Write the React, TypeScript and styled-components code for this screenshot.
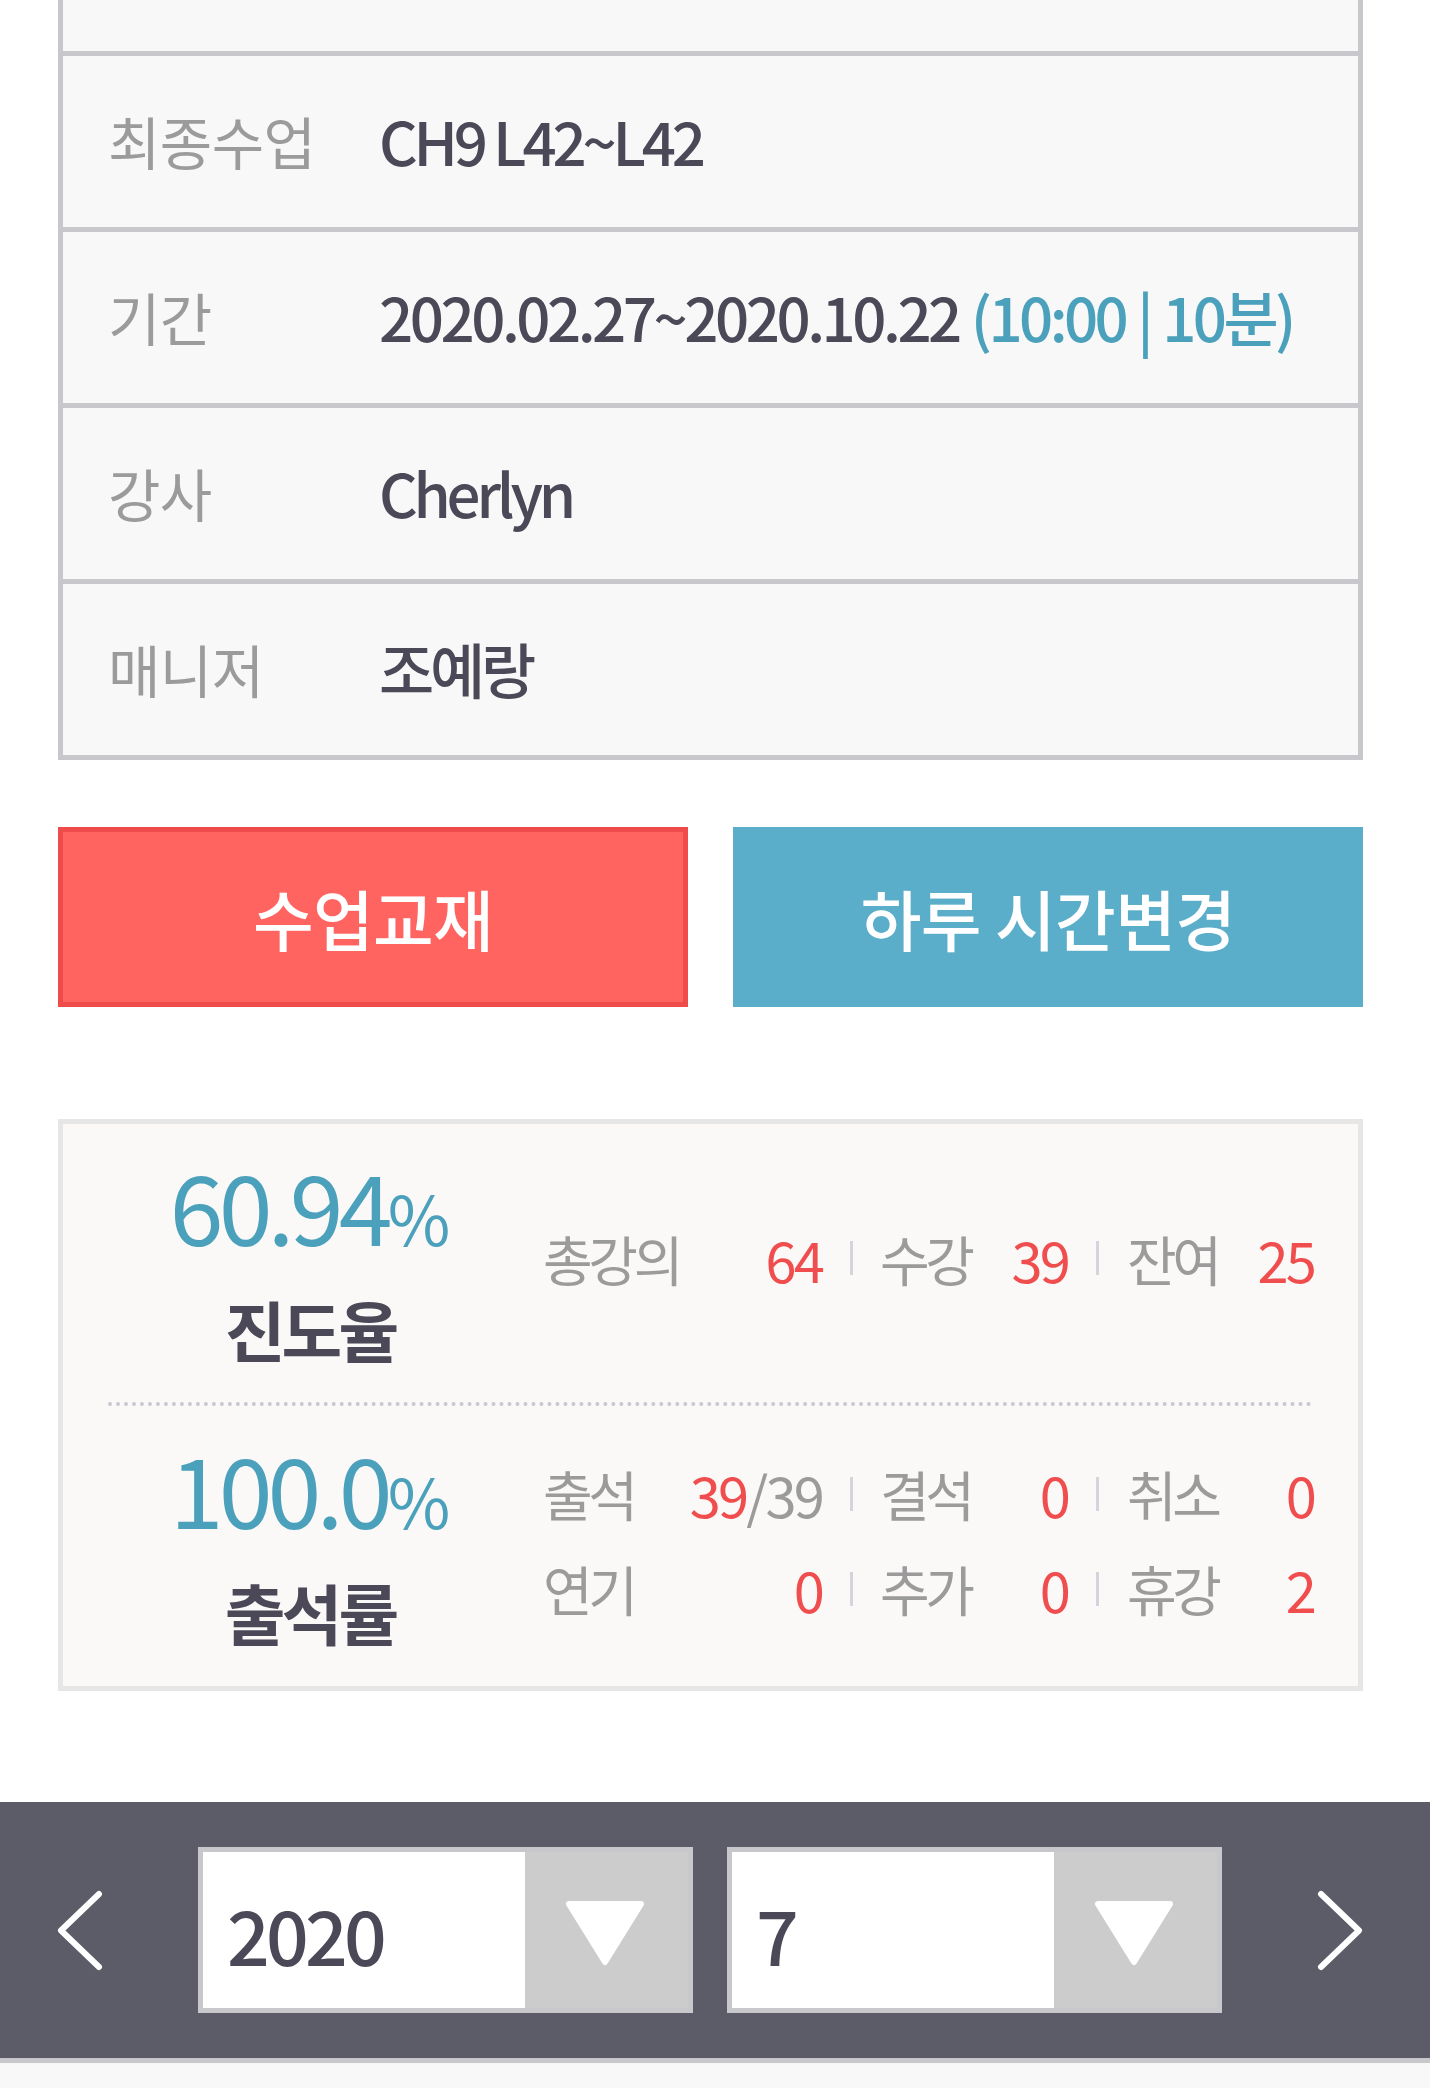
import React from "react";
import styled, { createGlobalStyle } from "styled-components";

const GlobalStyle = createGlobalStyle`
  html, body {
    margin: 0;
    padding: 0;
    background: #ffffff;
  }
  body {
    font-family: "Noto Sans CJK KR", "Noto Sans", sans-serif;
    color: #4b4957;
  }
  * {
    box-sizing: border-box;
  }
`;

const Page = styled.div`
  width: 1430px;
`;

const Content = styled.div`
  margin-left: 58px;
  width: 1305px;
`;

const InfoTable = styled.div`
  border: 5px solid #c8c8cc;
  border-top: none;
  background: #f8f8f8;
`;

const InfoRow = styled.div<{ $partial?: boolean }>`
  display: flex;
  align-items: center;
  height: ${(p) => (p.$partial ? "51px" : "176px")};
  border-top: ${(p) => (p.$partial ? "none" : "5px solid #c8c8cc")};
`;

const InfoLabel = styled.div`
  width: 316px;
  padding-left: 45px;
  padding-bottom: 4px;
  font-size: 57px;
  color: #9b9b9b;
  letter-spacing: -0.01em;
`;

const InfoValue = styled.div`
  font-size: 60px;
  font-weight: 500;
  color: #4b4957;
  letter-spacing: -0.07em;
  white-space: nowrap;
  padding-bottom: 4px;
`;

const DateRange = styled.span`
  letter-spacing: -0.058em;
`;

const Blue = styled.span`
  color: #4ba0bb;
  word-spacing: 2px;
  letter-spacing: -0.06em;
`;

const ButtonRow = styled.div`
  display: grid;
  grid-template-columns: 1fr 1fr;
  gap: 45px;
  margin-top: 67px;
`;

const ActionButton = styled.button<{ $tone: "red" | "blue" }>`
  height: 180px;
  display: flex;
  align-items: center;
  justify-content: center;
  font-family: inherit;
  font-size: 66px;
  font-weight: 500;
  letter-spacing: -0.01em;
  color: #ffffff;
  cursor: pointer;
  background: ${(p) => (p.$tone === "red" ? "#ff6461" : "#5aaeca")};
  border: 5px solid ${(p) => (p.$tone === "red" ? "#f04b4b" : "#5aaeca")};
  padding: 0;
`;

const StatsBox = styled.div`
  margin-top: 112px;
  border: 5px solid #e6e6e6;
  background: #faf9f7;
`;

const StatsSection = styled.div<{ $height: number }>`
  display: flex;
  align-items: center;
  height: ${(p) => p.$height}px;
`;

const Divider = styled.div`
  margin: 0 46px 0 45px;
  border-top: 4px dotted #c8c8d0;
`;

const RateColumn = styled.div`
  width: 480px;
  padding-left: 14px;
  padding-bottom: 10px;
  display: flex;
  flex-direction: column;
  align-items: center;
  gap: 30px;
`;

const RateNumber = styled.div`
  font-size: 97px;
  line-height: 96px;
  color: #4ba0bb;
  letter-spacing: -0.05em;
  white-space: nowrap;
`;

const Percent = styled.span`
  font-size: 68px;
  letter-spacing: 0;
`;

const RateLabel = styled.div`
  font-size: 66px;
  line-height: 66px;
  font-weight: 700;
  color: #4b4957;
  letter-spacing: -0.06em;
`;

const CountColumn = styled.div`
  flex: 1;
  padding-bottom: 10px;
  display: flex;
  flex-direction: column;
`;

const CountRow = styled.div`
  display: flex;
  align-items: center;
  height: 95px;
`;

const CountCell = styled.div<{ $width: number }>`
  width: ${(p) => p.$width}px;
  display: flex;
  align-items: center;
  justify-content: space-between;
`;

const CountLabel = styled.span`
  font-size: 54px;
  color: #9b9b9b;
  letter-spacing: -0.08em;
`;

const CountValue = styled.span<{ $muted?: boolean }>`
  font-size: 56px;
  color: ${(p) => (p.$muted ? "#9b9b9b" : "#f04e4e")};
  letter-spacing: -0.05em;
`;

const Separator = styled.div<{ $width: number }>`
  width: ${(p) => p.$width}px;
  display: flex;
  justify-content: center;

  &::before {
    content: "";
    width: 3px;
    height: 34px;
    background: #d4d4dc;
  }
`;

const BottomBar = styled.div`
  margin-top: 111px;
  height: 256px;
  background: #5c5c68;
  display: flex;
  align-items: center;
  justify-content: space-between;
  padding: 0 67px 0 57px;
`;

const NavArrow = styled.button`
  width: 46px;
  height: 81px;
  padding: 0;
  border: none;
  background: none;
  cursor: pointer;
  display: flex;
`;

const SelectGroup = styled.div`
  display: flex;
  gap: 34px;
`;

const SelectBox = styled.div`
  width: 495px;
  height: 166px;
  border: 5px solid #c8c8cc;
  display: flex;
`;

const SelectValue = styled.div`
  flex: 1;
  background: #ffffff;
  display: flex;
  align-items: center;
  padding-left: 24px;
  padding-top: 6px;
  font-size: 75px;
  font-weight: 500;
  color: #4b4957;
  letter-spacing: -0.05em;
`;

const SelectArrow = styled.div`
  width: 163px;
  background: #cccccc;
  display: flex;
  align-items: center;
  justify-content: center;
  padding-top: 6px;
  padding-right: 4px;
`;

const ListTop = styled.div`
  border-top: 5px solid #c8c8cc;
  background: #f8f8f8;
  height: 60px;
`;

const Chevron = ({ dir }: { dir: "left" | "right" }) => (
  <svg width="46" height="81" viewBox="0 0 46 81">
    <polyline
      points={dir === "left" ? "42,4 4,40.5 42,77" : "4,4 42,40.5 4,77"}
      fill="none"
      stroke="#ffffff"
      strokeWidth="6"
      strokeLinecap="round"
      strokeLinejoin="round"
    />
  </svg>
);

const Triangle = () => (
  <svg width="80" height="66" viewBox="0 0 80 66">
    <polygon
      points="4,4 76,4 40,62"
      fill="#ffffff"
      stroke="#ffffff"
      strokeWidth="6"
      strokeLinejoin="round"
    />
  </svg>
);

type Count = { label: string; value: string; rest?: string };

const CELL_WIDTHS = [279, 188, 187];
const SEP_WIDTHS = [58, 59];

const CountLine = ({ items }: { items: Count[] }) => (
  <CountRow>
    {items.map((item, i) => (
      <React.Fragment key={item.label}>
        {i > 0 && <Separator $width={SEP_WIDTHS[i - 1]} />}
        <CountCell $width={CELL_WIDTHS[i]}>
          <CountLabel>{item.label}</CountLabel>
          <span>
            <CountValue>{item.value}</CountValue>
            {item.rest && <CountValue $muted>{item.rest}</CountValue>}
          </span>
        </CountCell>
      </React.Fragment>
    ))}
  </CountRow>
);

const progressCounts: Count[] = [
  { label: "총강의", value: "64" },
  { label: "수강", value: "39" },
  { label: "잔여", value: "25" },
];

const attendCounts: Count[][] = [
  [
    { label: "출석", value: "39", rest: "/39" },
    { label: "결석", value: "0" },
    { label: "취소", value: "0" },
  ],
  [
    { label: "연기", value: "0" },
    { label: "추가", value: "0" },
    { label: "휴강", value: "2" },
  ],
];

const App: React.FC = () => {
  return (
    <Page>
      <GlobalStyle />
      <Content>
        <InfoTable>
          <InfoRow $partial />
          <InfoRow>
            <InfoLabel>최종수업</InfoLabel>
            <InfoValue>CH9 L42~L42</InfoValue>
          </InfoRow>
          <InfoRow>
            <InfoLabel>기간</InfoLabel>
            <InfoValue>
              <DateRange>2020.02.27~2020.10.22</DateRange>
              <Blue> (10:00 | 10분)</Blue>
            </InfoValue>
          </InfoRow>
          <InfoRow>
            <InfoLabel>강사</InfoLabel>
            <InfoValue>Cherlyn</InfoValue>
          </InfoRow>
          <InfoRow>
            <InfoLabel>매니저</InfoLabel>
            <InfoValue>조예랑</InfoValue>
          </InfoRow>
        </InfoTable>

        <ButtonRow>
          <ActionButton $tone="red">수업교재</ActionButton>
          <ActionButton $tone="blue">하루 시간변경</ActionButton>
        </ButtonRow>

        <StatsBox>
          <StatsSection $height={278}>
            <RateColumn>
              <RateNumber>
                60.94<Percent>%</Percent>
              </RateNumber>
              <RateLabel>진도율</RateLabel>
            </RateColumn>
            <CountColumn>
              <CountLine items={progressCounts} />
            </CountColumn>
          </StatsSection>
          <Divider />
          <StatsSection $height={280}>
            <RateColumn>
              <RateNumber>
                100.0<Percent>%</Percent>
              </RateNumber>
              <RateLabel>출석률</RateLabel>
            </RateColumn>
            <CountColumn>
              {attendCounts.map((row, i) => (
                <CountLine key={i} items={row} />
              ))}
            </CountColumn>
          </StatsSection>
        </StatsBox>
      </Content>

      <BottomBar>
        <NavArrow aria-label="이전 달">
          <Chevron dir="left" />
        </NavArrow>
        <SelectGroup>
          <SelectBox>
            <SelectValue>2020</SelectValue>
            <SelectArrow>
              <Triangle />
            </SelectArrow>
          </SelectBox>
          <SelectBox>
            <SelectValue>7</SelectValue>
            <SelectArrow>
              <Triangle />
            </SelectArrow>
          </SelectBox>
        </SelectGroup>
        <NavArrow aria-label="다음 달">
          <Chevron dir="right" />
        </NavArrow>
      </BottomBar>
      <ListTop />
    </Page>
  );
};

export default App;
